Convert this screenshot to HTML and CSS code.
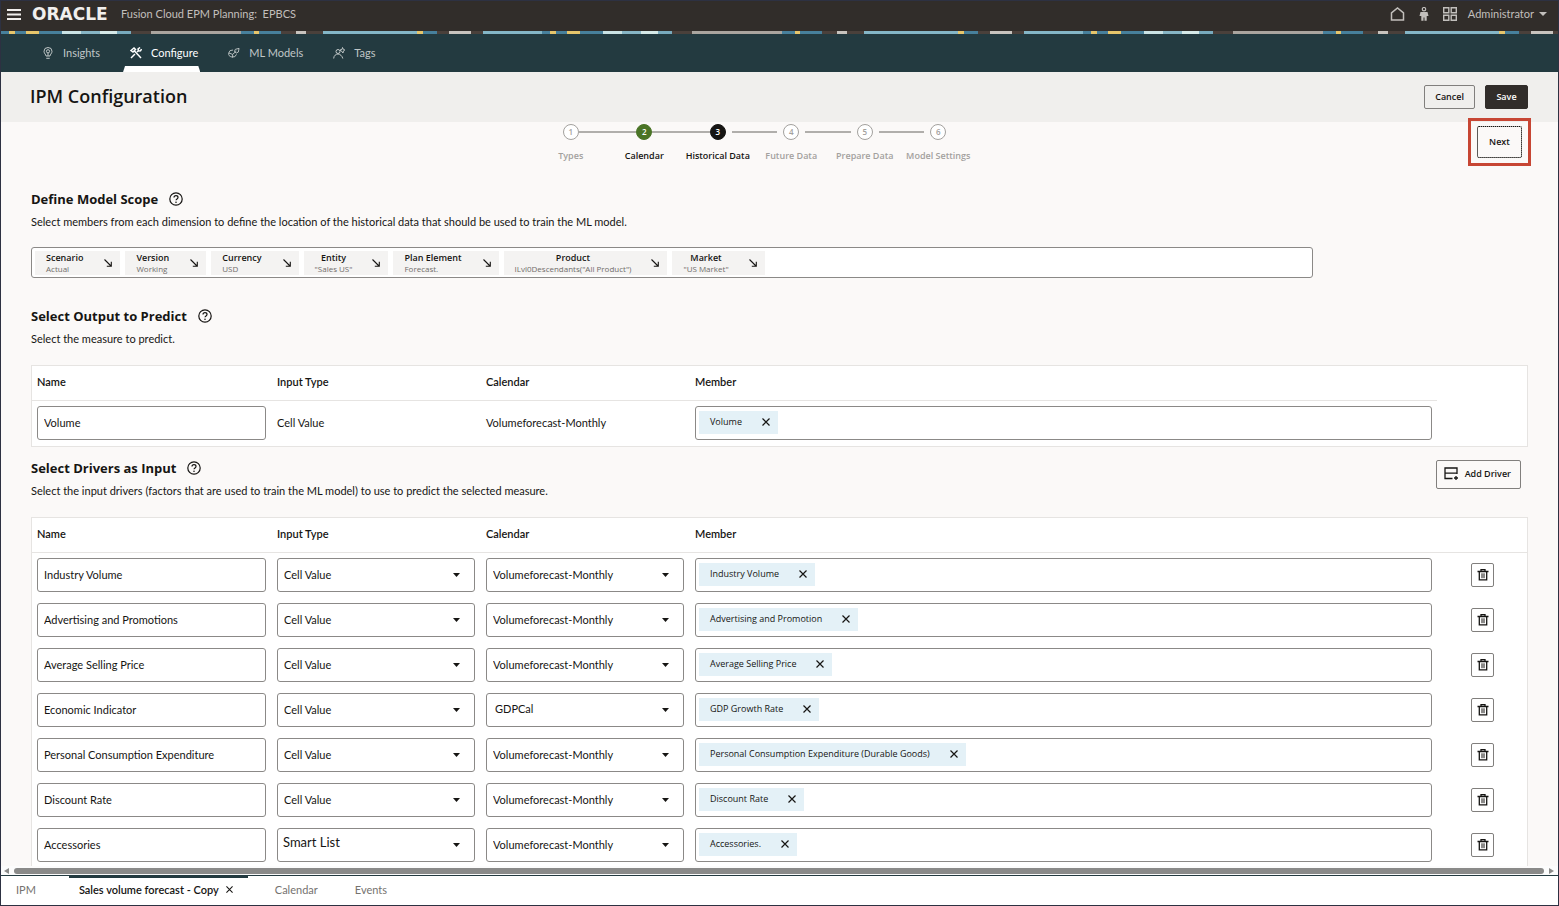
FILE: index.html
```html
<!DOCTYPE html>
<html lang="en">
<head>
<meta charset="utf-8">
<title>IPM Configuration</title>
<link rel="stylesheet" href="styles.css">
</head>
<body>
<svg class="symbols" aria-hidden="true">
  <symbol id="help" viewBox="0 0 14 14"><circle cx="7" cy="7" r="6.2" fill="none" stroke="currentColor" stroke-width="1.2"/><path d="M5 5.6C5 4.4 5.9 3.7 7 3.7s2 .7 2 1.8C9 6.900 7 6.900 7 8.300" fill="none" stroke="currentColor" stroke-width="1.2"/><circle cx="7" cy="10.200" r=".8" fill="currentColor"/></symbol>
  <symbol id="arrow" viewBox="0 0 8 8"><path d="M.5.5 7 7M7.300 2.800v4.500H2.800" fill="none" stroke="currentColor" stroke-width="1.100"/></symbol>
  <symbol id="close" viewBox="0 0 8 8"><path d="M.5.5l7 7M7.500.5l-7 7" fill="none" stroke="currentColor" stroke-width="1.200"/></symbol>
  <symbol id="trash" viewBox="0 0 12 12"><path d="M.5 2.500h11M4 2.500V.7h4v1.800M2.300 2.500v8.300h7.400V2.500" fill="none" stroke="currentColor" stroke-width="1.300"/><path d="M5 4.300v4.900M7 4.300v4.900" fill="none" stroke="currentColor"/></symbol>
</svg>

<header class="topbar">
  <button class="bare menu" aria-label="Menu"><svg width="14" height="11" viewBox="0 0 14 11"><path d="M0 1h14M0 5.500h14M0 10h14" stroke="currentColor" stroke-width="2"/></svg></button>
  <span class="brand">ORACLE</span>
  <span class="product">Fusion Cloud EPM Planning:&nbsp; EPBCS</span>
  <div class="tools">
    <button class="bare" aria-label="Home"><svg width="15" height="14" viewBox="0 0 15 14"><path d="M1.500 13V5.800L7.500 1l6 4.800V13z" fill="none" stroke="currentColor" stroke-width="1.500"/></svg></button>
    <button class="bare" aria-label="Accessibility"><svg width="10" height="14" viewBox="0 0 10 14"><circle cx="5" cy="2.200" r="1.700" fill="none" stroke="currentColor" stroke-width="1.200"/><path d="M1.500 5h7l1 4H7.700v4.800H5.500V10.500h-1v3.300H2.300V9H.5z" fill="currentColor"/></svg></button>
    <button class="bare" aria-label="Cards"><svg width="14" height="14" viewBox="0 0 14 14"><path d="M.7.7h5.100v5.100H.7zM8.200.7h5.100v5.100H8.200zM.7 8.200h5.100v5.100H.7zM8.200 8.200h5.100v5.100H8.200z" fill="none" stroke="currentColor" stroke-width="1.400"/></svg></button>
    <button class="bare user">Administrator <svg width="8" height="4" viewBox="0 0 8 4"><path d="M0 0h8L4 4z" fill="currentColor"/></svg></button>
  </div>
</header>
<div class="strip"></div>

<nav class="nav">
  <a href="#insights"><svg width="12" height="12" viewBox="0 0 12 12" fill="none" stroke="currentColor"><path d="M4 9C4 7.500 2 6.500 2 4.300a4 3.800 0 0 1 8 0C10 6.500 8 7.500 8 9zM4.300 11.300h3.400"/><circle cx="6" cy="4.300" r="1.600"/><path d="M6 6v3"/></svg>Insights</a>
  <a href="#configure" class="active" aria-current="page"><svg width="12" height="12" viewBox="0 0 12 12" fill="none" stroke="currentColor" stroke-width="1.500"><path d="M1 3.500 4 1l1.500 1.500L3 5zM4.500 4l6.500 7M1 11l4-4M7 5l1.500-1.500L8 2l2-1.500M8.500 4l2-.2L11.500 2"/></svg>Configure</a>
  <a href="#models"><svg width="12" height="12" viewBox="0 0 13 12" fill="none" stroke="currentColor"><path d="M9.200 7.500A4.300 3.800 0 1 1 5.500 2.800M1 6l4 1.500L9 4M5 7.500v3.500"/><path d="M7 4.500 8 2l4-1-.8 4-2.200 1z"/></svg>ML Models</a>
  <a href="#tags"><svg width="12" height="12" viewBox="0 0 12 12" fill="none" stroke="currentColor"><circle cx="5" cy="4.500" r="2"/><path d="M.7 11.500C.7 8.700 3 7 5 7s4.300 2 4.800 4.500M7 3l2-.5.5-2 .8 1.800 1.500.7-1.500 1L10 6 8.800 4.500z"/></svg>Tags</a>
</nav>

<div class="titlebar">
  <h1>IPM Configuration</h1>
  <button class="btn">Cancel</button>
  <button class="btn primary">Save</button>
</div>

<main class="content">
  <div class="wizard">
    <ol class="steps">
      <li class="step"><i class="line none"></i><b class="dot">1</b><i class="line"></i><span>Types</span></li>
      <li class="step done"><i class="line"></i><b class="dot">2</b><i class="line"></i><span>Calendar</span></li>
      <li class="step current" aria-current="step"><i class="line"></i><b class="dot">3</b><i class="line after"></i><span>Historical Data</span></li>
      <li class="step"><i class="line before"></i><b class="dot">4</b><i class="line after"></i><span>Future Data</span></li>
      <li class="step"><i class="line before"></i><b class="dot">5</b><i class="line after"></i><span>Prepare Data</span></li>
      <li class="step"><i class="line before"></i><b class="dot">6</b><i class="line none"></i><span>Model Settings</span></li>
    </ol>
    <div class="callout"><button class="btn next">Next</button></div>
  </div>

  <section class="scope">
    <h2>Define Model Scope <svg class="help"><use href="#help"/></svg></h2>
    <p>Select members from each dimension to define the location of the historical data that should be used to train the ML model.</p>
    <div class="pov">
      <button class="dim"><span>Scenario<small>Actual</small></span><svg><use href="#arrow"/></svg></button>
      <button class="dim"><span>Version<small>Working</small></span><svg><use href="#arrow"/></svg></button>
      <button class="dim"><span>Currency<small>USD</small></span><svg><use href="#arrow"/></svg></button>
      <button class="dim mid"><span>Entity<small>"Sales US"</small></span><svg><use href="#arrow"/></svg></button>
      <button class="dim"><span>Plan Element<small>Forecast.</small></span><svg><use href="#arrow"/></svg></button>
      <button class="dim mid"><span>Product<small>ILvl0Descendants("All Product")</small></span><svg><use href="#arrow"/></svg></button>
      <button class="dim mid"><span>Market<small>"US Market"</small></span><svg><use href="#arrow"/></svg></button>
    </div>
  </section>

  <section class="output">
    <h2>Select Output to Predict <svg class="help"><use href="#help"/></svg></h2>
    <p>Select the measure to predict.</p>
    <table class="grid short">
      <colgroup><col class="c-name"><col class="c-pick"><col class="c-pick"><col><col class="c-act"></colgroup>
      <thead><tr><th>Name</th><th>Input Type</th><th>Calendar</th><th>Member</th><td></td></tr></thead>
      <tbody>
        <tr><td><input class="field" aria-label="Name" value="Volume"></td><td>Cell Value</td><td>Volumeforecast-Monthly</td><td><div class="members"><span class="chip">Volume<button class="bare" aria-label="Remove"><svg><use href="#close"/></svg></button></span></div></td><td></td></tr>
      </tbody>
    </table>
  </section>

  <section class="drivers">
    <div class="head">
      <div>
        <h2>Select Drivers as Input <svg class="help"><use href="#help"/></svg></h2>
        <p>Select the input drivers (factors that are used to train the ML model) to use to predict the selected measure.</p>
      </div>
      <button class="btn add"><svg width="15" height="14" viewBox="0 0 15 14"><path d="M8.500 11.500H1V1h12v6M1 6.200h12" fill="none" stroke="currentColor" stroke-width="1.300"/><path d="M12 9v4M10 11h4" stroke="currentColor" stroke-width="1.300"/></svg>Add Driver</button>
    </div>
    <table class="grid">
      <colgroup><col class="c-name"><col class="c-pick"><col class="c-pick"><col><col class="c-act"></colgroup>
      <thead><tr><th>Name</th><th>Input Type</th><th>Calendar</th><th>Member</th><td></td></tr></thead>
      <tbody>
        <tr><td><input class="field" aria-label="Name" value="Industry Volume"></td><td><select class="field" aria-label="Input Type"><option>Cell Value</option></select></td><td><select class="field" aria-label="Calendar"><option>Volumeforecast-Monthly</option></select></td><td><div class="members"><span class="chip">Industry Volume<button class="bare" aria-label="Remove"><svg><use href="#close"/></svg></button></span></div></td><td><button class="delete" aria-label="Delete"><svg><use href="#trash"/></svg></button></td></tr>
        <tr><td><input class="field" aria-label="Name" value="Advertising and Promotions"></td><td><select class="field" aria-label="Input Type"><option>Cell Value</option></select></td><td><select class="field" aria-label="Calendar"><option>Volumeforecast-Monthly</option></select></td><td><div class="members"><span class="chip">Advertising and Promotion<button class="bare" aria-label="Remove"><svg><use href="#close"/></svg></button></span></div></td><td><button class="delete" aria-label="Delete"><svg><use href="#trash"/></svg></button></td></tr>
        <tr><td><input class="field" aria-label="Name" value="Average Selling Price"></td><td><select class="field" aria-label="Input Type"><option>Cell Value</option></select></td><td><select class="field" aria-label="Calendar"><option>Volumeforecast-Monthly</option></select></td><td><div class="members"><span class="chip">Average Selling Price<button class="bare" aria-label="Remove"><svg><use href="#close"/></svg></button></span></div></td><td><button class="delete" aria-label="Delete"><svg><use href="#trash"/></svg></button></td></tr>
        <tr><td><input class="field" aria-label="Name" value="Economic Indicator"></td><td><select class="field" aria-label="Input Type"><option>Cell Value</option></select></td><td><select class="field inset" aria-label="Calendar"><option>GDPCal</option></select></td><td><div class="members"><span class="chip">GDP Growth Rate<button class="bare" aria-label="Remove"><svg><use href="#close"/></svg></button></span></div></td><td><button class="delete" aria-label="Delete"><svg><use href="#trash"/></svg></button></td></tr>
        <tr><td><input class="field" aria-label="Name" value="Personal Consumption Expenditure"></td><td><select class="field" aria-label="Input Type"><option>Cell Value</option></select></td><td><select class="field" aria-label="Calendar"><option>Volumeforecast-Monthly</option></select></td><td><div class="members"><span class="chip">Personal Consumption Expenditure (Durable Goods)<button class="bare" aria-label="Remove"><svg><use href="#close"/></svg></button></span></div></td><td><button class="delete" aria-label="Delete"><svg><use href="#trash"/></svg></button></td></tr>
        <tr><td><input class="field" aria-label="Name" value="Discount Rate"></td><td><select class="field" aria-label="Input Type"><option>Cell Value</option></select></td><td><select class="field" aria-label="Calendar"><option>Volumeforecast-Monthly</option></select></td><td><div class="members"><span class="chip">Discount Rate<button class="bare" aria-label="Remove"><svg><use href="#close"/></svg></button></span></div></td><td><button class="delete" aria-label="Delete"><svg><use href="#trash"/></svg></button></td></tr>
        <tr><td><input class="field" aria-label="Name" value="Accessories"></td><td><select class="field large" aria-label="Input Type"><option>Smart List</option></select></td><td><select class="field" aria-label="Calendar"><option>Volumeforecast-Monthly</option></select></td><td><div class="members"><span class="chip">Accessories.<button class="bare" aria-label="Remove"><svg><use href="#close"/></svg></button></span></div></td><td><button class="delete" aria-label="Delete"><svg><use href="#trash"/></svg></button></td></tr>
      </tbody>
    </table>
  </section>
</main>

<div class="scrollbar">
  <svg width="5" height="6" viewBox="0 0 5 6"><path d="M5 0v6L0 3z" fill="currentColor"/></svg>
  <div class="thumb"></div>
  <svg width="5" height="6" viewBox="0 0 5 6"><path d="M0 0v6l5-3z" fill="currentColor"/></svg>
</div>
<footer class="tabs">
  <a href="#ipm">IPM</a>
  <a href="#sales" class="active" aria-current="page">Sales volume forecast - Copy <svg><use href="#close"/></svg></a>
  <a href="#calendar">Calendar</a>
  <a href="#events">Events</a>
</footer>
</body>
</html>
```
FILE: styles.css
```css
* { box-sizing: border-box; }

body {
  --small-font: "Open Sans", "Noto Sans", sans-serif;
  display: flex;
  flex-direction: column;
  height: 100vh;
  margin: 0;
  border: 1px solid #2d3142;
  background: #fbf9f8;
  color: #161513;
  font: 11px/16px Lato, "Open Sans", sans-serif;
  overflow: hidden;
}

.symbols { position: absolute; width: 0; height: 0; }

button, input, select { margin: 0; color: inherit; font: inherit; }
svg { display: block; flex: none; }
a { color: inherit; text-decoration: none; }
h1, h2, p, ol { margin: 0; padding: 0; }
.bare { display: flex; align-items: center; padding: 0; border: 0; background: none; }

/* Global header */
.topbar {
  display: flex;
  align-items: center;
  flex: none;
  height: 30px;
  padding: 0 11px 4px 6px;
  background: #312d2a;
  color: #c2bfbc;
}
.menu { margin-right: 11px; color: #f1efed; }
.brand { width: 89px; color: #f1efed; font: 700 17px/20px "DejaVu Sans", sans-serif; }
.tools { display: flex; align-items: center; gap: 14px; margin-left: auto; }
.user { gap: 5px; margin-left: -3px; }
.strip {
  flex: none;
  height: 3px;
  background: repeating-linear-gradient(90deg,
    #47809c 0 8px, #e6c56b 8px 14px, #47809c 14px 25px, #e6c56b 25px 38px, #47809c 38px 61px,
    #c9e2e4 61px 80px, #86b5c5 80px 99px, #d5e9e8 99px 116px, #78aabd 116px 130px, #4a403b 130px 150px,
    #aaa59f 150px 240px, #47809c 240px 253px, #e6c56b 253px 258px, #47809c 258px 280px, #4a403b 280px 295px,
    #c7c3be 295px 305px, #4a403b 305px 322px, #84b6c7 322px 416px, #e6c56b 416px 422px, #47809c 422px 436px,
    #4a403b 436px 448px, #c7c3be 448px 470px, #4a403b 470px 482px, #84b6c7 482px 541px);
}

/* Section navigation */
.nav {
  display: flex;
  flex: none;
  gap: 21px;
  height: 38px;
  padding-left: 34px;
  background: #233a40;
  color: #c0c7c7;
}
.nav a { position: relative; display: flex; align-items: center; gap: 9px; padding: 0 2px 0 7px; }
.nav .active { color: #fff; }
.nav .active::after {
  content: "";
  position: absolute;
  right: 0;
  bottom: 0;
  left: 0;
  height: 6px;
  background: #fff;
  clip-path: polygon(2px 0, calc(100% - 2px) 0, 100% 100%, 0 100%);
}

/* Title and buttons */
.titlebar {
  display: flex;
  align-items: center;
  flex: none;
  gap: 10px;
  height: 50px;
  padding: 0 30px 0 29px;
  background: #f0efed;
}
h1, h2, .btn, .steps, .dim, .chip { font-family: var(--small-font); }
h1 { margin-right: auto; padding-bottom: 2px; font-size: 18px; line-height: 24px; font-weight: 600; }
.btn {
  height: 24px;
  padding: 0 10px;
  border: 1px solid #817f7d;
  border-radius: 2px;
  background: transparent;
  font-size: 9px;
  line-height: 14px;
  font-weight: 600;
}
.btn.primary { min-width: 43px; border-color: #312d2a; background: #312d2a; color: #fff; }

.content { flex: 1; min-height: 0; padding: 0 30px; overflow: clip; overflow-clip-margin: 4px; }

/* Wizard steps */
.wizard { display: flex; height: 67px; padding-left: 10px; margin-right: -3px; }
.steps { display: grid; grid-template-columns: repeat(6, 1fr); width: 441px; margin: 2px auto 0; list-style: none; }
.step { display: grid; grid-template-columns: 1fr 16px 1fr; grid-template-rows: 16px 16px; row-gap: 8px; align-content: start; align-items: center; color: #a3a19e; font-size: 9px; font-weight: 600; }
.step span { grid-column: 1 / 4; justify-self: center; white-space: nowrap; }
.dot { height: 16px; border: 1px solid #a3a19e; border-radius: 8px; background: #fff; font-size: 8px; line-height: 14px; text-align: center; font-weight: 600; }
.line { height: 2px; background: #b0aeab; }
.none { background: none; }
.before { margin-right: 6px; }
.after { margin-left: 6px; }
.done, .current { color: #161513; }
.done .dot { border-color: #4a7426; background: #4a7426; color: #fff; }
.current .dot { border-color: #161513; background: #161513; color: #fff; }
.callout { position: relative; align-self: flex-start; margin-top: -4px; padding: 5px 6px; border: 3px solid #c74634; }
.next { display: block; height: 32px; min-width: 45px; border-color: #a3a19e; outline: 1px dotted #161513; outline-offset: -1px; }

/* Content sections */
h2 { display: flex; align-items: center; gap: 11px; font-size: 13px; line-height: 20px; font-weight: 700; }
.help { width: 14px; height: 14px; }
p { margin-top: 5px; }
.pov {
  display: flex;
  gap: 5px;
  margin: 17px 215px 0 0;
  padding: 3px 2px 2px 3px;
  border: 1px solid #8b8987;
  border-radius: 3px;
  background: #fff;
}
.dim {
  display: flex;
  align-items: center;
  gap: 21px;
  height: 24px;
  padding: 0 8px 0 11px;
  border: 0;
  background: #f4f3f2;
  font-size: 9px;
  line-height: 11px;
  font-weight: 600;
  text-align: left;
}
.mid { gap: 20px; text-align: center; }
.dim small { display: block; color: #706d6a; font-size: 8px; font-weight: 400; }
.dim svg { width: 8px; height: 8px; }
.output { margin-top: 28px; }
.drivers { margin-top: 11px; }
.head { display: flex; justify-content: space-between; align-items: flex-start; }
.add { display: flex; align-items: center; gap: 6px; height: 29px; margin: 2px 7px 0 0; padding: 0 9px 2px 7px; }

/* Tables */
.grid {
  width: 100%;
  margin-top: 18px;
  border: 1px solid #e6e4e2;
  border-collapse: separate;
  border-spacing: 0;
  table-layout: fixed;
  background: #fff;
}
.c-name { width: 240px; }
.c-pick { width: 209px; }
.c-act { width: 90px; }
.grid td, .grid th { padding: 5px 6px 6px 5px; text-align: left; vertical-align: middle; }
.grid thead th, .grid thead td { height: 35px; padding: 0 5px 2px; border-bottom: 1px solid #e6e4e2; font-weight: 600; }
.short thead td:last-child { border-bottom: 0; }
.field, .members {
  display: block;
  width: 100%;
  height: 34px;
  border: 1px solid #8b8987;
  border-radius: 3px;
  background-color: #fff;
}
.field { padding: 0 6px; }
input.field { padding-bottom: 2px; }
select.field {
  appearance: none;
  background-image: url("data:image/svg+xml,%3Csvg xmlns='http://www.w3.org/2000/svg' width='7' height='4'%3E%3Cpath d='M0 0h7L3.5 4z' fill='%23161513'/%3E%3C/svg%3E");
  background-position: right 14px center;
  background-repeat: no-repeat;
}
select.inset { padding: 0 8px 2px; }
select.large { padding: 0 5px 6px; font-size: 13px; }
.grid td:nth-child(4) { padding-right: 5px; }
.members { padding: 4px 3px; }
.chip { display: inline-flex; align-items: center; gap: 20px; height: 23px; padding: 0 8px 1px 11px; background: #e4f1f7; font-size: 9px; line-height: 14px; }
.chip svg { width: 8px; height: 8px; }
.delete { display: grid; place-items: center; width: 23px; height: 24px; margin-left: 29px; padding: 0; border: 1px solid #817f7d; border-radius: 2px; background: #fff; }
.delete svg { width: 12px; height: 12px; }

/* Scrollbar and bottom tabs */
.scrollbar { position: relative; display: flex; align-items: center; flex: none; gap: 5px; height: 9px; padding: 0 4px 0 3px; background: #fcfcfc; color: #8a8a89; }
.thumb { flex: 1; height: 6px; border-radius: 3px; background: #8a8a89; }
.tabs { display: flex; flex: none; gap: 17px; height: 30px; padding-left: 5px; border-top: 1px solid #233a40; background: #fff; color: #75726f; }
.tabs a { display: flex; align-items: center; gap: 7px; padding: 0 10px 4px; border-top: 2px solid transparent; }
.tabs .active { margin-left: 6px; padding-right: 15px; border-top-color: #233a40; color: #161513; font-weight: 600; }
.tabs svg { width: 7px; height: 7px; }
```
